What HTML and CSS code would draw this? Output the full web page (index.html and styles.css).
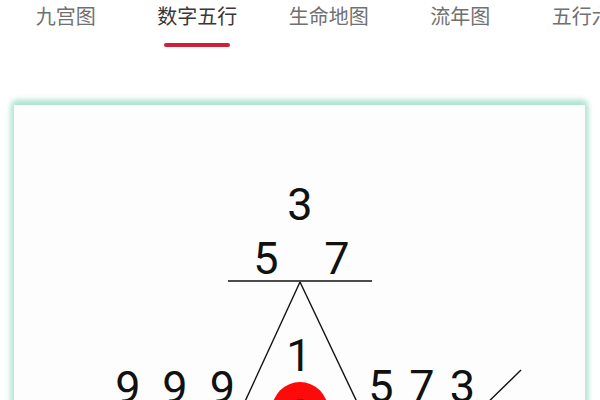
FILE: index.html
```html
<!DOCTYPE html>
<html lang="zh">
<head>
<meta charset="utf-8">
<link rel="stylesheet" href="styles.css">
</head>
<body>
<div class="tabs">
  <div class="tab">九宫图</div>
  <div class="tab active">数字五行<span class="bar"></span></div>
  <div class="tab">生命地图</div>
  <div class="tab">流年图</div>
  <div class="tab">五行六边</div>
</div>
<div class="card">
  <svg class="diagram" width="571" height="320" viewBox="14 104 571 320">
    <g class="lines">
      <line x1="228" y1="280" x2="372" y2="280"/>
      <line x1="300" y1="281" x2="236" y2="420"/>
      <line x1="300" y1="281" x2="366" y2="420"/>
      <line x1="521" y1="369" x2="478" y2="411"/>
    </g>
    <circle class="dot" cx="300" cy="409" r="28"/>
    <g class="nums">
      <text x="300" y="219">3</text>
      <text x="266" y="273">5</text>
      <text x="337" y="273">7</text>
      <text x="299" y="370">1</text>
      <text x="128" y="402">9</text>
      <text x="175" y="402">9</text>
      <text x="222.5" y="402">9</text>
      <text x="381" y="401">5</text>
      <text x="422" y="401">7</text>
      <text x="462.5" y="401">3</text>
      <text class="small" x="300" y="420">2</text>
    </g>
  </svg>
</div>
</body>
</html>
```
FILE: styles.css
```css
html, body {
  margin: 0;
  padding: 0;
  background: #ffffff;
  width: 600px;
  height: 400px;
  overflow: hidden;
}
.tabs {
  display: flex;
  width: 600px;
  overflow: hidden;
  font-family: "Noto Sans CJK SC", "Noto Sans", sans-serif;
}
.tab {
  flex: 0 0 131.5px;
  display: flex;
  flex-direction: column;
  align-items: center;
  padding-top: 3px;
  height: 47px;
  font-size: 20px;
  line-height: 26px;
  color: #707070;
  white-space: nowrap;
}
.tab.active {
  color: #383838;
}
.bar {
  display: block;
  width: 66px;
  height: 4px;
  margin-top: 14px;
  border-radius: 2px;
  background: #cf2038;
}
.card {
  margin: 55px 15px 0 14px;
  width: 571px;
  height: 400px;
  background: #fdfdfd;
  box-shadow: 0 -4px 6px 1px #b0e4d3, -2px 0 6px 1px #c2ebde, 2px 0 6px 1px #c2ebde;
}
.diagram {
  display: block;
}
.lines line {
  stroke: #111111;
  stroke-width: 1.4;
}
.dot {
  fill: #ff0a0a;
}
.nums text {
  font-family: Roboto, "Liberation Sans", sans-serif;
  font-size: 45px;
  fill: #111111;
  text-anchor: middle;
}
.nums text.small {
  font-size: 32px;
}
```
